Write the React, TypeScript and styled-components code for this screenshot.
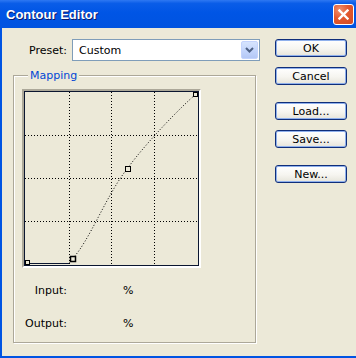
import React from "react";
import styled, { createGlobalStyle } from "styled-components";

const Global = createGlobalStyle`
  html, body { margin: 0; padding: 0; background: #ECE9D8; }
  body { font-family: "DejaVu Sans", "Liberation Sans", sans-serif; font-size: 11px; color: #000; }
`;

const Window = styled.div`
  width: 356px;
  height: 358px;
  display: flex;
  flex-direction: column;
  overflow: hidden;
`;

const TitleBar = styled.div`
  height: 28px;
  flex: none;
  display: flex;
  align-items: center;
  justify-content: space-between;
  padding: 0 2px 0 6px;
  box-sizing: border-box;
  background: linear-gradient(180deg, #2E78F2 0%, #0A5DE8 12%, #0055E5 45%, #0053E0 100%);
`;

const Title = styled.div`
  font-family: "Liberation Sans", Arial, sans-serif;
  font-weight: bold;
  font-size: 13px;
  color: #fff;
  text-shadow: 1px 1px 0 #0A1A6A;
`;

const CloseButton = styled.div`
  width: 21px;
  height: 21px;
  box-sizing: border-box;
  border: 1px solid #fff;
  border-radius: 3px;
  background: radial-gradient(circle at 30% 25%, #F0906E 0%, #E2582F 45%, #D24A22 100%);
  display: flex;
  align-items: center;
  justify-content: center;
`;

const Body = styled.div`
  flex: 1;
  display: flex;
  border-left: 2px solid #0054E3;
  border-bottom: 2px solid #0054E3;
  background: #ECE9D8;
`;

const LeftColumn = styled.div`
  display: flex;
  flex-direction: column;
  padding: 11px 0 0 11px;
`;

const PresetRow = styled.div`
  display: flex;
  align-items: center;
  height: 22px;
`;

const FieldLabel = styled.div<{ $w: number }>`
  width: ${(p) => p.$w}px;
  text-align: right;
  line-height: 13px;
  flex: none;
`;

const Select = styled.div`
  margin-left: 5px;
  width: 188px;
  height: 22px;
  box-sizing: border-box;
  border: 1px solid #7F9DB9;
  background: #fff;
  display: flex;
  align-items: center;
  justify-content: space-between;
  padding: 1px 1px 1px 6px;
`;

const SelectText = styled.span`
  line-height: 13px;
`;

const DropButton = styled.div`
  width: 17px;
  height: 18px;
  box-sizing: border-box;
  border: 1px solid #C3D3FD;
  border-radius: 2px;
  background: linear-gradient(180deg, #D6E4FD 0%, #C1D3FB 60%, #B4C8F6 100%);
  display: flex;
  align-items: center;
  justify-content: center;
`;

const GroupBox = styled.div`
  position: relative;
  margin-top: 14px;
  width: 243px;
  height: 268px;
  box-sizing: border-box;
  border: 1px solid #ACA899;
  box-shadow: inset 1px 1px 0 #fff, 1px 1px 0 #fff;
  padding: 13px 0 0 8px;
  display: flex;
  flex-direction: column;
`;

const Legend = styled.div`
  position: absolute;
  top: -7px;
  left: 14px;
  padding: 0 2px;
  background: #ECE9D8;
  color: #0046D5;
  line-height: 13px;
`;

const GraphFrame = styled.div`
  width: 179px;
  height: 179px;
  box-sizing: border-box;
  border: 2px solid;
  border-color: #ACA899 #fff #fff #ACA899;
`;

const GraphInner = styled.div`
  width: 175px;
  height: 175px;
  box-sizing: border-box;
  border: 1px solid #0B1630;
  display: flex;
`;

const ReadoutRow = styled.div<{ $top: number }>`
  display: flex;
  margin-top: ${(p) => p.$top}px;
  margin-left: -8px;
  line-height: 13px;
`;

const Percent = styled.div`
  margin-left: 56px;
`;

const RightColumn = styled.div`
  display: flex;
  flex-direction: column;
  padding: 11px 0 0 15px;
`;

const Button = styled.div<{ $gap: number }>`
  width: 72px;
  height: 18px;
  box-sizing: border-box;
  margin-top: ${(p) => p.$gap}px;
  border: 1px solid #0F2E7A;
  border-radius: 3px;
  box-shadow: inset 0 0 0 1px #8FB0EC;
  background: linear-gradient(180deg, #FFFFFF 0%, #F6F5F0 55%, #E6E4DA 100%);
  display: flex;
  align-items: center;
  justify-content: center;
  line-height: 13px;
`;

const Graph: React.FC = () => (
  <svg width="173" height="173" viewBox="0 0 173 173">
    <g stroke="#000" strokeWidth="1" strokeDasharray="1 2" fill="none">
      <line x1="44.5" y1="0" x2="44.5" y2="173" />
      <line x1="86.5" y1="0" x2="86.5" y2="173" />
      <line x1="129.5" y1="0" x2="129.5" y2="173" />
      <line x1="0" y1="43.5" x2="173" y2="43.5" />
      <line x1="0" y1="86.5" x2="173" y2="86.5" />
      <line x1="0" y1="129.5" x2="173" y2="129.5" />
    </g>
    <line x1="4" y1="171.5" x2="44" y2="171.5" stroke="#0B1630" strokeWidth="1" />
    <path
      d="M44 171 Q46 170 47.5 166.5 C63.8 150.2 81.3 103.3 102 77 C122.7 48.7 157 14 171 2"
      stroke="#000"
      strokeWidth="1"
      strokeDasharray="1 2"
      fill="none"
    />
    <g stroke="#000" strokeWidth="1" fill="#ECE9D8">
      <rect x="0.5" y="168.5" width="4" height="4" />
      <rect x="45.5" y="164.5" width="5" height="5" strokeWidth="1.5" />
      <rect x="100.5" y="74.5" width="5" height="5" />
      <rect x="168.5" y="0.5" width="4" height="4" />
    </g>
  </svg>
);

export default function App() {
  return (
    <>
      <Global />
      <Window>
        <TitleBar>
          <Title>Contour Editor</Title>
          <CloseButton>
            <svg width="11" height="11" viewBox="0 0 11 11">
              <path d="M1.5 1.5 L9.5 9.5 M9.5 1.5 L1.5 9.5" stroke="#fff" strokeWidth="2.4" strokeLinecap="square" />
            </svg>
          </CloseButton>
        </TitleBar>
        <Body>
          <LeftColumn>
            <PresetRow>
              <FieldLabel $w={54}>Preset:</FieldLabel>
              <Select>
                <SelectText>Custom</SelectText>
                <DropButton>
                  <svg width="9" height="6" viewBox="0 0 9 6">
                    <path d="M1 1 L4.5 4.5 L8 1" stroke="#4D6185" strokeWidth="2" fill="none" />
                  </svg>
                </DropButton>
              </Select>
            </PresetRow>
            <GroupBox>
              <Legend>Mapping</Legend>
              <GraphFrame>
                <GraphInner>
                  <Graph />
                </GraphInner>
              </GraphFrame>
              <ReadoutRow $top={16}>
                <FieldLabel $w={53}>Input:</FieldLabel>
                <Percent>%</Percent>
              </ReadoutRow>
              <ReadoutRow $top={20}>
                <FieldLabel $w={53}>Output:</FieldLabel>
                <Percent>%</Percent>
              </ReadoutRow>
            </GroupBox>
          </LeftColumn>
          <RightColumn>
            <Button $gap={0}>OK</Button>
            <Button $gap={10}>Cancel</Button>
            <Button $gap={17}>Load...</Button>
            <Button $gap={10}>Save...</Button>
            <Button $gap={17}>New...</Button>
          </RightColumn>
        </Body>
      </Window>
    </>
  );
}
